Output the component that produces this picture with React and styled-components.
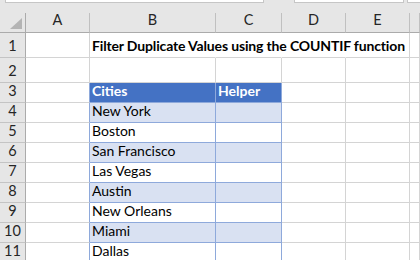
import React from 'react';
import styled, { createGlobalStyle } from 'styled-components';

const Global = createGlobalStyle`
  html, body { margin: 0; padding: 0; background: #ffffff; }
  body { width: 420px; height: 260px; overflow: hidden; font-family: Lato, "Liberation Sans", sans-serif; }
`;

const Frame = styled.div`
  width: 420px;
  height: 260px;
  overflow: hidden;
  background: #ffffff;
  display: flex;
  flex-direction: column;
`;

const TopBar = styled.div`
  flex: none;
  height: 13px;
  background: #e6e6e6;
  display: flex;
  align-items: flex-start;
`;

const Field = styled.div`
  flex: ${p => (p.$grow ? '1' : 'none')};
  width: ${p => (p.$w ? `${p.$w}px` : 'auto')};
  margin-left: ${p => p.$ml}px;
  height: 3px;
  box-sizing: border-box;
  background: #ffffff;
  border: 1px solid #c6c6c6;
  border-top: none;
  ${p => (p.$grow ? 'border-right: none;' : '')}
`;

const Grid = styled.div`
  display: grid;
  grid-template-columns: 26px 64px 126px 66px 64px 64px 1fr;
  grid-template-rows: 20px 25px 25px repeat(9, 20px);
`;

const Corner = styled.div`
  box-sizing: border-box;
  background: #e6e6e6;
  border-right: 1px solid #ababab;
  border-bottom: 1px solid #ababab;
  display: flex;
  align-items: flex-end;
  justify-content: flex-end;
  padding: 0 3px 3px 0;
`;

const ColHead = styled.div`
  box-sizing: border-box;
  background: #e6e6e6;
  border-right: 1px solid #c0c0c0;
  border-bottom: 1px solid #ababab;
  display: flex;
  align-items: flex-end;
  justify-content: center;
  padding-bottom: 6px;
  font-size: 14.5px;
  line-height: 12px;
  color: #262626;
`;

const RowHead = styled.div`
  box-sizing: border-box;
  background: #e6e6e6;
  border-right: 1px solid #ababab;
  border-bottom: 1px solid #c4c4c4;
  display: flex;
  align-items: flex-end;
  justify-content: center;
  padding-bottom: 5px;
  font-size: 14.5px;
  line-height: 12px;
  color: #262626;
`;

const Cell = styled.div`
  box-sizing: border-box;
  background: ${p => p.$bg || 'transparent'};
  border-right: 1px solid ${p => p.$rc || '#d4d4d4'};
  border-bottom: 1px solid ${p => p.$bc || '#d4d4d4'};
  ${p => (p.$noRight ? 'border-right-color: transparent;' : '')}
  display: flex;
  align-items: flex-end;
  padding: 0 0 5px 2px;
  font-size: 14px;
  line-height: 12px;
  font-weight: ${p => (p.$bold ? 700 : 400)};
  letter-spacing: ${p => (p.$tight ? '-0.15px' : '0')};
  color: ${p => p.$color || '#000000'};
  white-space: nowrap;
  min-width: 0;
`;

const cols = ['A', 'B', 'C', 'D', 'E'];
const cities = ['New York', 'Boston', 'San Francisco', 'Las Vegas', 'Austin', 'New Orleans', 'Miami', 'Dallas'];

const TBL = '#8ea9db';

function Triangle() {
  return (
    <svg width="12" height="11" viewBox="0 0 12 11">
      <polygon points="12,0 12,11 0,11" fill="#b4b4b4" />
    </svg>
  );
}

export default function App() {
  return (
    <Frame>
      <Global />
      <TopBar>
        <Field $ml={5} $w={259} />
        <Field $ml={30} $w={110} />
        <Field $ml={3} $grow />
      </TopBar>
      <Grid>
        <Corner><Triangle /></Corner>
        {cols.map(c => <ColHead key={c}>{c}</ColHead>)}
        <ColHead />

        <RowHead>1</RowHead>
        <Cell />
        <Cell $bold $tight $noRight>Filter Duplicate Values using the COUNTIF function</Cell>
        <Cell $noRight />
        <Cell $noRight />
        <Cell />
        <Cell />

        <RowHead>2</RowHead>
        <Cell /><Cell /><Cell /><Cell /><Cell /><Cell />

        <RowHead>3</RowHead>
        <Cell $rc={TBL} />
        <Cell $bg="#4472c4" $color="#ffffff" $bold $rc={TBL} $bc={TBL}>Cities</Cell>
        <Cell $bg="#4472c4" $color="#ffffff" $bold $rc={TBL} $bc={TBL}>Helper</Cell>
        <Cell /><Cell /><Cell />

        {cities.map((city, i) => {
          const band = i % 2 === 0 ? '#d9e1f2' : undefined;
          return (
            <React.Fragment key={city}>
              <RowHead>{i + 4}</RowHead>
              <Cell $rc={TBL} />
              <Cell $bg={band} $rc={TBL} $bc={TBL}>{city}</Cell>
              <Cell $bg={band} $rc={TBL} $bc={TBL} />
              <Cell /><Cell /><Cell />
            </React.Fragment>
          );
        })}
      </Grid>
    </Frame>
  );
}
